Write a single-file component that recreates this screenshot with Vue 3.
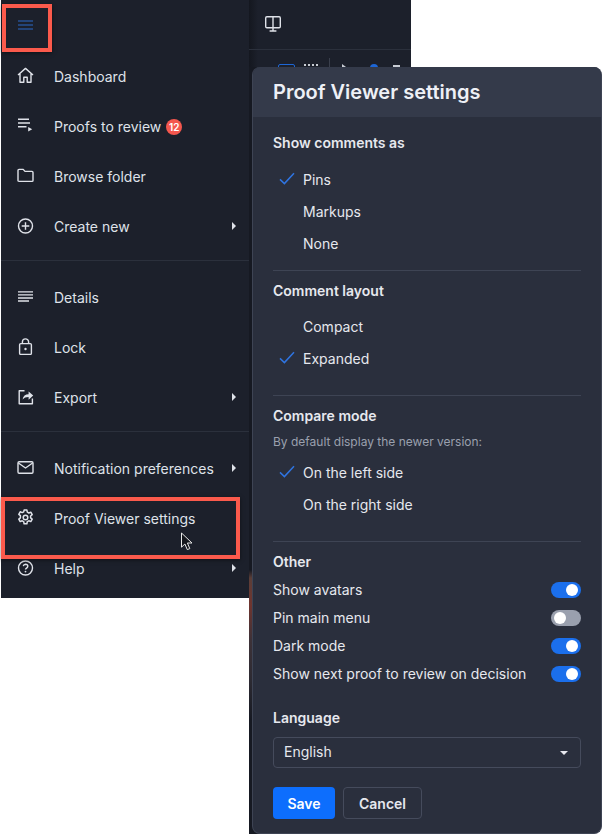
<script setup>
const navGroups = [
  [
    { label: "Dashboard", icon: "home" },
    { label: "Proofs to review", icon: "review", badge: 12 },
    { label: "Browse folder", icon: "folder" },
    { label: "Create new", icon: "plus", more: true },
  ],
  [
    { label: "Details", icon: "details" },
    { label: "Lock", icon: "lock" },
    { label: "Export", icon: "export", more: true },
  ],
  [
    { label: "Notification preferences", icon: "mail", more: true },
    { label: "Proof Viewer settings", icon: "gear" },
    { label: "Help", icon: "help", more: true },
  ],
];

const optionGroups = [
  {
    title: "Show comments as",
    options: [
      { label: "Pins", checked: true },
      { label: "Markups" },
      { label: "None" },
    ],
  },
  {
    title: "Comment layout",
    options: [{ label: "Compact" }, { label: "Expanded", checked: true }],
  },
  {
    title: "Compare mode",
    hint: "By default display the newer version:",
    options: [
      { label: "On the left side", checked: true },
      { label: "On the right side" },
    ],
  },
];

const toggles = [
  { label: "Show avatars", on: true },
  { label: "Pin main menu", on: false },
  { label: "Dark mode", on: true },
  { label: "Show next proof to review on decision", on: true },
];
</script>

<template>
  <div class="page">
    <aside class="sidebar">
      <div class="menu-top">
        <svg class="burger" width="15" height="10" viewBox="0 0 15 10">
          <path d="M0 1h15M0 5h15M0 9h15" stroke="#2b68c8" stroke-width="1.1" fill="none" />
        </svg>
      </div>

      <template v-for="(group, g) in navGroups" :key="g">
        <div class="nav-group" :class="`nav-group-${g}`">
          <div v-for="item in group" :key="item.label" class="nav-row">
            <span class="nav-icon">
              <svg width="18" height="18" viewBox="0 0 18 18" fill="none" stroke="#dfe2e9" stroke-width="1.4">
                <template v-if="item.icon === 'home'">
                  <path d="M2 9 9.5 2.4 17 9M4 7.6v8.6h3.8v-5h3.4v5H15V7.6" stroke-linejoin="round" />
                </template>
                <template v-else-if="item.icon === 'review'">
                  <path d="M2 3.2h11M2 7h12M2 10.8h8.5" stroke-width="1.5" />
                  <path d="M12.2 11v4.6l4-2.3z" fill="#dfe2e9" stroke="none" />
                </template>
                <template v-else-if="item.icon === 'folder'">
                  <path d="M2 4.4a1 1 0 0 1 1-1h4.2l1.8 2h7a1 1 0 0 1 1 1v8a1 1 0 0 1-1 1H3a1 1 0 0 1-1-1z" stroke-linejoin="round" />
                </template>
                <template v-else-if="item.icon === 'plus'">
                  <circle cx="9.5" cy="10" r="7" />
                  <path d="M9.5 6.2v7.6M5.7 10h7.6" />
                </template>
                <template v-else-if="item.icon === 'details'">
                  <path d="M2 4.8h15M2 7.9h15M2 11h15M2 14h11" stroke-width="1.3" />
                </template>
                <template v-else-if="item.icon === 'lock'">
                  <rect x="3.6" y="6.6" width="11.8" height="10.8" rx="1.2" />
                  <path d="M6.4 6.6V5a3.1 3.1 0 0 1 6.2 0v1.6" />
                  <circle cx="9.5" cy="12" r="1.2" fill="#dfe2e9" stroke="none" />
                </template>
                <template v-else-if="item.icon === 'export'">
                  <path d="M8.5 3.8H3.2v13h13.2v-5.2" stroke-linejoin="round" />
                  <path d="M6.6 12.4c.4-3.4 2.8-5.2 6-5.2V4.4l4.6 4.2-4.6 4.2V9.9c-2.6 0-4.6.8-6 2.5z" fill="#dfe2e9" stroke="none" />
                </template>
                <template v-else-if="item.icon === 'mail'">
                  <rect x="2" y="3.8" width="15" height="11.4" rx="1.2" />
                  <path d="m2.4 5 7.1 5 7.1-5" />
                </template>
                <template v-else-if="item.icon === 'gear'">
                  <g transform="translate(0.5 0.5)">
                    <path d="M7.6 1.6h2.8l.4 2.1 1.5.8 2-.8 1.4 2.5-1.6 1.3v1.8l1.6 1.3-1.4 2.5-2-.8-1.5.8-.4 2.2H7.6l-.4-2.2-1.5-.8-2 .8-1.4-2.5 1.6-1.3V7.1L2.3 5.8l1.4-2.5 2 .8 1.5-.8z" stroke-linejoin="round" stroke-width="1.5" />
                    <circle cx="9" cy="9" r="2.3" stroke-width="1.5" />
                  </g>
                </template>
                <template v-else-if="item.icon === 'help'">
                  <circle cx="9.5" cy="10" r="7" />
                  <path d="M7.3 8.2A2.3 2.3 0 0 1 9.5 6.3c1.3 0 2.3.8 2.3 2 0 1.7-2.3 1.8-2.3 3.3" />
                  <circle cx="9.5" cy="13.6" r=".9" fill="#dfe2e9" stroke="none" />
                </template>
              </svg>
            </span>
            <span class="nav-label">{{ item.label }}</span>
            <span v-if="item.badge" class="badge">{{ item.badge }}</span>
            <span v-if="item.more" class="caret"></span>
          </div>
        </div>
      </template>
    </aside>

    <div class="main">
      <header class="toolbar">
        <svg width="18" height="18" viewBox="0 0 18 18" fill="none" stroke="#dfe2e9" stroke-width="1.4">
          <rect x="1.7" y="1.7" width="14.6" height="11" rx="1.2" />
          <path d="M9 1.7v13.6M5.6 16h6.8" />
        </svg>
      </header>
      <div class="strip">
        <span class="tool tool-blue"></span>
        <span class="tool tool-dots"></span>
        <span class="tool-sep"></span>
        <span class="tool-arrow"></span>
        <span class="tool-drop"></span>
        <span class="tool-white"></span>
      </div>
    </div>

    <section class="panel">
      <h1 class="panel-title">Proof Viewer settings</h1>
      <div class="panel-body">
        <div v-for="group in optionGroups" :key="group.title" class="option-group">
          <h2 class="group-title">{{ group.title }}</h2>
          <p v-if="group.hint" class="group-hint">{{ group.hint }}</p>
          <div v-for="opt in group.options" :key="opt.label" class="option">
            <svg v-if="opt.checked" class="check" width="16" height="13" viewBox="0 0 16 13" fill="none">
              <path d="M1 7.4 5.4 11.6 15 1.2" stroke="#2f74e0" stroke-width="1.5" />
            </svg>
            <span class="row-text">{{ opt.label }}</span>
          </div>
        </div>

        <div class="other">
          <h2 class="group-title">Other</h2>
          <div v-for="t in toggles" :key="t.label" class="toggle-row">
            <span class="row-text">{{ t.label }}</span>
            <span class="toggle" :class="{ on: t.on }"><i></i></span>
          </div>
        </div>

        <div class="language">
          <h2 class="group-title">Language</h2>
          <div class="select">
            <span class="row-text">English</span>
            <span class="select-caret"></span>
          </div>
        </div>

        <div class="actions">
          <button type="button" class="btn btn-save">Save</button>
          <button type="button" class="btn btn-cancel">Cancel</button>
        </div>
      </div>
    </section>

    <span class="mark mark-burger"></span>
    <span class="mark mark-settings"></span>
    <svg class="cursor" width="14" height="20" viewBox="0 0 14 20">
      <path d="M1.5 1v14.2l3.4-3.2 2.4 5.6 2.5-1-2.4-5.6h4.6z" fill="#14161c" stroke="#e8e8e8" stroke-width="1" />
    </svg>
  </div>
</template>

<style>
html,
body {
  background: #fff;
}
</style>

<style scoped>
.page {
  position: relative;
  width: 606px;
  height: 834px;
  overflow: hidden;
  display: flex;
  align-items: flex-start;
  font-family: Inter, "Liberation Sans", sans-serif;
  font-size: 14px;
  color: #e6e8ee;
}

.sidebar {
  width: 248px;
  height: 598px;
  margin-left: 1px;
  background: #1c202b;
  flex-shrink: 0;
}

.menu-top {
  height: 52px;
  padding: 20px 0 0 17px;
  box-sizing: border-box;
}

.burger {
  display: block;
}

.nav-group-0 {
  padding-bottom: 8px;
  border-bottom: 1px solid #2b303c;
}

.nav-group-1 {
  padding: 12px 0 8px;
  border-bottom: 1px solid #2b303c;
}

.nav-group-2 {
  padding-top: 12px;
}

.nav-row {
  height: 50px;
  display: flex;
  align-items: center;
  padding-left: 15px;
  position: relative;
}

.nav-icon {
  width: 38px;
  height: 18px;
  margin-top: -4px;
  flex-shrink: 0;
}

.nav-icon svg {
  display: block;
}

.nav-label {
  color: #dfe2e9;
  margin-top: -2px;
}

.badge {
  margin-left: 5px;
  width: 16px;
  height: 16px;
  border-radius: 50%;
  background: #f4574e;
  color: #fff;
  font-size: 10px;
  font-weight: 600;
  line-height: 16px;
  text-align: center;
}

.caret {
  position: absolute;
  left: 231px;
  top: 20px;
  border-left: 4px solid #dfe2e9;
  border-top: 4px solid transparent;
  border-bottom: 4px solid transparent;
}

.main {
  width: 162px;
  height: 834px;
  background: linear-gradient(180deg, #161922 570px, #5a3e38 578px, #70352f 605px, #3d3238 640px, #2c2a32 680px, #161922 720px);
  flex-shrink: 0;
}

.toolbar {
  height: 50px;
  background: linear-gradient(90deg, #14171f, #1c202b 9px);
  border-bottom: 1px solid #2b303c;
  padding: 15px 0 0 15px;
  box-sizing: border-box;
}

.toolbar svg {
  display: block;
}

.strip {
  position: relative;
  height: 17px;
  background: linear-gradient(90deg, #14171f, #1c202b 9px);
}

.tool {
  position: absolute;
  top: 14px;
  height: 6px;
}

.tool-blue {
  left: 29px;
  width: 15px;
  border: 1.5px solid #1d66d6;
  border-radius: 2px;
}

.tool-dots {
  left: 55px;
  width: 14px;
  border-top: 2px dotted #c8ccd4;
}

.tool-sep {
  position: absolute;
  left: 80px;
  top: 8px;
  width: 1px;
  height: 9px;
  background: #3a3f4c;
}

.tool-arrow {
  position: absolute;
  left: 93px;
  top: 14px;
  border-left: 4px solid #c8ccd4;
  border-top: 3px solid transparent;
}

.tool-drop {
  position: absolute;
  left: 121px;
  top: 14px;
  width: 8px;
  height: 6px;
  background: #1d66d6;
  border-radius: 4px 4px 0 0;
}

.tool-white {
  position: absolute;
  left: 144px;
  top: 15px;
  width: 7px;
  height: 2px;
  background: #c8ccd4;
}

.panel {
  position: absolute;
  left: 252px;
  top: 67px;
  width: 350px;
  height: 767px;
  box-sizing: border-box;
  background: #2a2f3d;
  border: 1px solid #3e4454;
  border-top: 0;
  border-radius: 8px;
  overflow: hidden;
}

.panel-title {
  margin: 0;
  height: 50px;
  padding-left: 20px;
  background: #343a4a;
  font-size: 20px;
  font-weight: 600;
  line-height: 50px;
  color: #eef0f6;
}

.panel-body {
  padding: 0 20px;
}

.option-group {
  padding: 10px 0 20px;
  border-bottom: 1px solid #3e4454;
}

.option-group:first-child {
  padding: 16px 0 10px;
}

.group-title {
  margin: 0;
  font-size: 14px;
  font-weight: 600;
  line-height: 20px;
  color: #e6e8ee;
}

.group-hint {
  margin: 8px 0 0;
  font-size: 12px;
  line-height: 16px;
  color: #9aa0ae;
}

.option {
  position: relative;
  height: 32px;
  padding-left: 30px;
  display: flex;
  align-items: center;
  color: #e6e8ee;
}

.row-text {
  margin-top: -2px;
}

.group-title + .option {
  margin-top: 10px;
}

.option-group:first-child .group-title + .option {
  margin-top: 11px;
}

.group-hint + .option {
  margin-top: 7px;
}

.check {
  position: absolute;
  left: 6px;
  top: 8px;
}

.other {
  padding-top: 10px;
}

.toggle-row {
  height: 28px;
  display: flex;
  align-items: center;
  justify-content: space-between;
}

.other .group-title {
  margin-bottom: 4px;
}

.toggle {
  width: 30px;
  height: 16px;
  border-radius: 8px;
  background: #9aa0ae;
  display: flex;
  align-items: center;
  padding: 0 3px;
  box-sizing: border-box;
}

.toggle i {
  width: 12px;
  height: 12px;
  border-radius: 50%;
  background: #fff;
}

.toggle.on {
  background: #1b6fec;
  justify-content: flex-end;
}

.language {
  margin-top: 20px;
}

.select {
  margin-top: 9px;
  height: 31px;
  box-sizing: border-box;
  border: 1px solid #454b5c;
  border-radius: 4px;
  display: flex;
  align-items: center;
  justify-content: space-between;
  padding: 0 12px 0 10px;
}

.select-caret {
  border-top: 4px solid #e6e8ee;
  border-left: 4px solid transparent;
  border-right: 4px solid transparent;
}

.actions {
  margin-top: 19px;
  display: flex;
  gap: 8px;
}

.btn {
  height: 32px;
  border-radius: 4px;
  font-family: inherit;
  font-size: 14px;
  font-weight: 600;
  padding: 0;
}

.btn-save {
  width: 62px;
  background: #0d6efd;
  border: 0;
  color: #fff;
}

.btn-cancel {
  width: 79px;
  background: transparent;
  border: 1px solid #454b5c;
  color: #e6e8ee;
}

.mark {
  position: absolute;
  border: 4px solid #fb5a4c;
  box-sizing: border-box;
  box-shadow: 0 1px 4px rgba(0, 0, 0, 0.5);
}

.mark-burger {
  left: 2px;
  top: 4px;
  width: 50px;
  height: 48px;
}

.mark-settings {
  left: 1px;
  top: 497px;
  width: 239px;
  height: 62px;
}

.cursor {
  position: absolute;
  left: 180px;
  top: 532px;
}
</style>
